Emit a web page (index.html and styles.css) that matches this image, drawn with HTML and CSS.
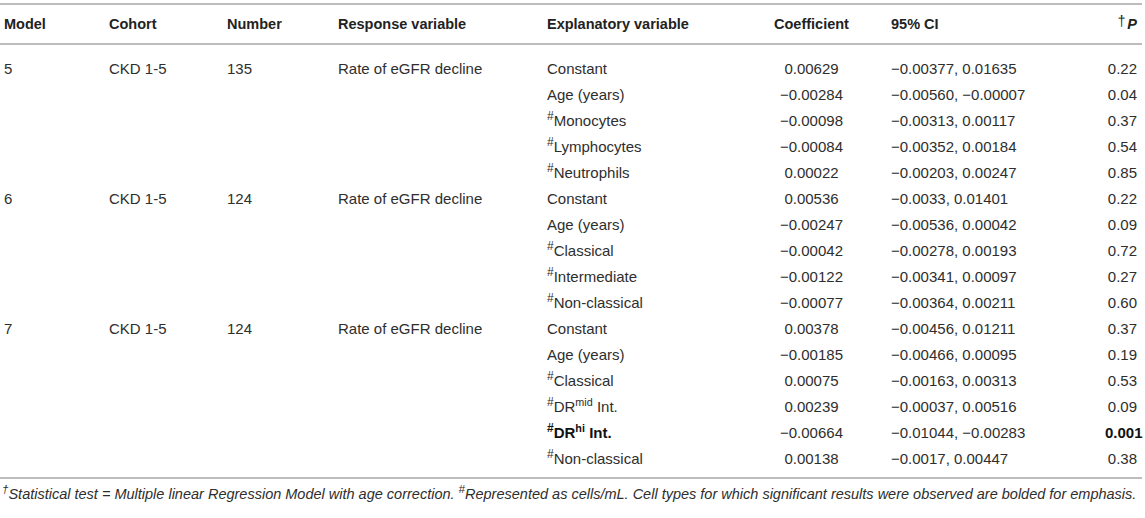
FILE: index.html
```html
<!DOCTYPE html>
<html>
<head>
<meta charset="utf-8">
<link rel="stylesheet" href="styles.css">
</head>
<body>
<div class="wrap">
<table class="tbl">
  <colgroup>
    <col class="c-model"><col class="c-cohort"><col class="c-num"><col class="c-resp"><col class="c-expl"><col class="c-coef"><col class="c-ci"><col class="c-p">
  </colgroup>
  <thead>
    <tr>
      <th>Model</th><th>Cohort</th><th>Number</th><th>Response variable</th><th>Explanatory variable</th><th class="ctr">Coefficient</th><th>95% CI</th><th class="pcol"><sup class="dag">†</sup><i>P</i></th>
    </tr>
  </thead>
  <tbody>
    <tr class="first"><td>5</td><td>CKD 1-5</td><td>135</td><td>Rate of eGFR decline</td><td>Constant</td><td class="ctr">0.00629</td><td>−0.00377, 0.01635</td><td class="pcol">0.22</td></tr>
    <tr><td></td><td></td><td></td><td></td><td>Age (years)</td><td class="ctr">−0.00284</td><td>−0.00560, −0.00007</td><td class="pcol">0.04</td></tr>
    <tr><td></td><td></td><td></td><td></td><td><sup>#</sup>Monocytes</td><td class="ctr">−0.00098</td><td>−0.00313, 0.00117</td><td class="pcol">0.37</td></tr>
    <tr><td></td><td></td><td></td><td></td><td><sup>#</sup>Lymphocytes</td><td class="ctr">−0.00084</td><td>−0.00352, 0.00184</td><td class="pcol">0.54</td></tr>
    <tr><td></td><td></td><td></td><td></td><td><sup>#</sup>Neutrophils</td><td class="ctr">0.00022</td><td>−0.00203, 0.00247</td><td class="pcol">0.85</td></tr>
    <tr><td>6</td><td>CKD 1-5</td><td>124</td><td>Rate of eGFR decline</td><td>Constant</td><td class="ctr">0.00536</td><td>−0.0033, 0.01401</td><td class="pcol">0.22</td></tr>
    <tr><td></td><td></td><td></td><td></td><td>Age (years)</td><td class="ctr">−0.00247</td><td>−0.00536, 0.00042</td><td class="pcol">0.09</td></tr>
    <tr><td></td><td></td><td></td><td></td><td><sup>#</sup>Classical</td><td class="ctr">−0.00042</td><td>−0.00278, 0.00193</td><td class="pcol">0.72</td></tr>
    <tr><td></td><td></td><td></td><td></td><td><sup>#</sup>Intermediate</td><td class="ctr">−0.00122</td><td>−0.00341, 0.00097</td><td class="pcol">0.27</td></tr>
    <tr><td></td><td></td><td></td><td></td><td><sup>#</sup>Non-classical</td><td class="ctr">−0.00077</td><td>−0.00364, 0.00211</td><td class="pcol">0.60</td></tr>
    <tr><td>7</td><td>CKD 1-5</td><td>124</td><td>Rate of eGFR decline</td><td>Constant</td><td class="ctr">0.00378</td><td>−0.00456, 0.01211</td><td class="pcol">0.37</td></tr>
    <tr><td></td><td></td><td></td><td></td><td>Age (years)</td><td class="ctr">−0.00185</td><td>−0.00466, 0.00095</td><td class="pcol">0.19</td></tr>
    <tr><td></td><td></td><td></td><td></td><td><sup>#</sup>Classical</td><td class="ctr">0.00075</td><td>−0.00163, 0.00313</td><td class="pcol">0.53</td></tr>
    <tr><td></td><td></td><td></td><td></td><td><sup>#</sup>DR<sup class="word">mid</sup> Int.</td><td class="ctr">0.00239</td><td>−0.00037, 0.00516</td><td class="pcol">0.09</td></tr>
    <tr><td></td><td></td><td></td><td></td><td class="bold"><sup>#</sup>DR<sup class="word">hi</sup> Int.</td><td class="ctr">−0.00664</td><td>−0.01044, −0.00283</td><td class="pcol bold">0.001</td></tr>
    <tr class="last"><td></td><td></td><td></td><td></td><td><sup>#</sup>Non-classical</td><td class="ctr">0.00138</td><td>−0.0017, 0.00447</td><td class="pcol">0.38</td></tr>
  </tbody>
</table>
<p class="note"><sup>†</sup>Statistical test = Multiple linear Regression Model with age correction. <sup>#</sup>Represented as cells/mL. Cell types for which significant results were observed are bolded for emphasis.</p>
</div>
</body>
</html>
```

FILE: styles.css
```css
html, body {
  margin: 0;
  padding: 0;
  background: #ffffff;
}
body {
  font-family: "Liberation Sans", Arial, sans-serif;
  color: #2e2e2e;
}
.wrap {
  width: 1142px;
  padding-top: 3px;
}
.tbl {
  width: 1142px;
  border-collapse: collapse;
  table-layout: fixed;
  font-size: 15px;
}
.c-model { width: 105px; }
.c-cohort { width: 118px; }
.c-num { width: 111px; }
.c-resp { width: 209px; }
.c-expl { width: 197px; }
.c-coef { width: 143px; }
.c-ci { width: 222px; }
.c-p { width: 37px; }

.tbl thead tr {
  border-top: 2px solid #bdbdbd;
  border-bottom: 2px solid #bdbdbd;
}
.tbl th {
  font-weight: bold;
  font-size: 14.5px;
  text-align: left;
  color: #222222;
  height: 38px;
  padding: 0 4px;
  vertical-align: middle;
}
.tbl td {
  height: 26px;
  padding: 0 4px;
  line-height: 17px;
  vertical-align: middle;
  white-space: nowrap;
}
.tbl tbody tr.first td {
  padding-top: 10px;
}
.tbl tbody tr.last td {
  padding-bottom: 6px;
}
.tbl tbody tr.last {
  border-bottom: 2px solid #bdbdbd;
}
.tbl td:nth-child(7), .tbl th:nth-child(7) {
  padding-left: 8px;
}
.ctr { text-align: center !important; }
.pcol {
  text-align: right !important;
  padding-right: 5px !important;
  padding-left: 0 !important;
}
.bold { font-weight: bold; color: #111; }
sup {
  font-size: 0.8em;
  line-height: 0;
  vertical-align: 0.5em;
}
sup.word {
  font-size: 0.72em;
  vertical-align: 0.55em;
}
.dag {
  font-weight: normal;
  font-size: 0.95em;
  vertical-align: 0.25em;
  margin-right: 2px;
}
.note {
  margin: 6px 0 0 0;
  font-size: 14.5px;
  font-style: italic;
  padding-left: 2px;
  white-space: nowrap;
  line-height: 18px;
}
.note sup { font-size: 0.8em; }
```
